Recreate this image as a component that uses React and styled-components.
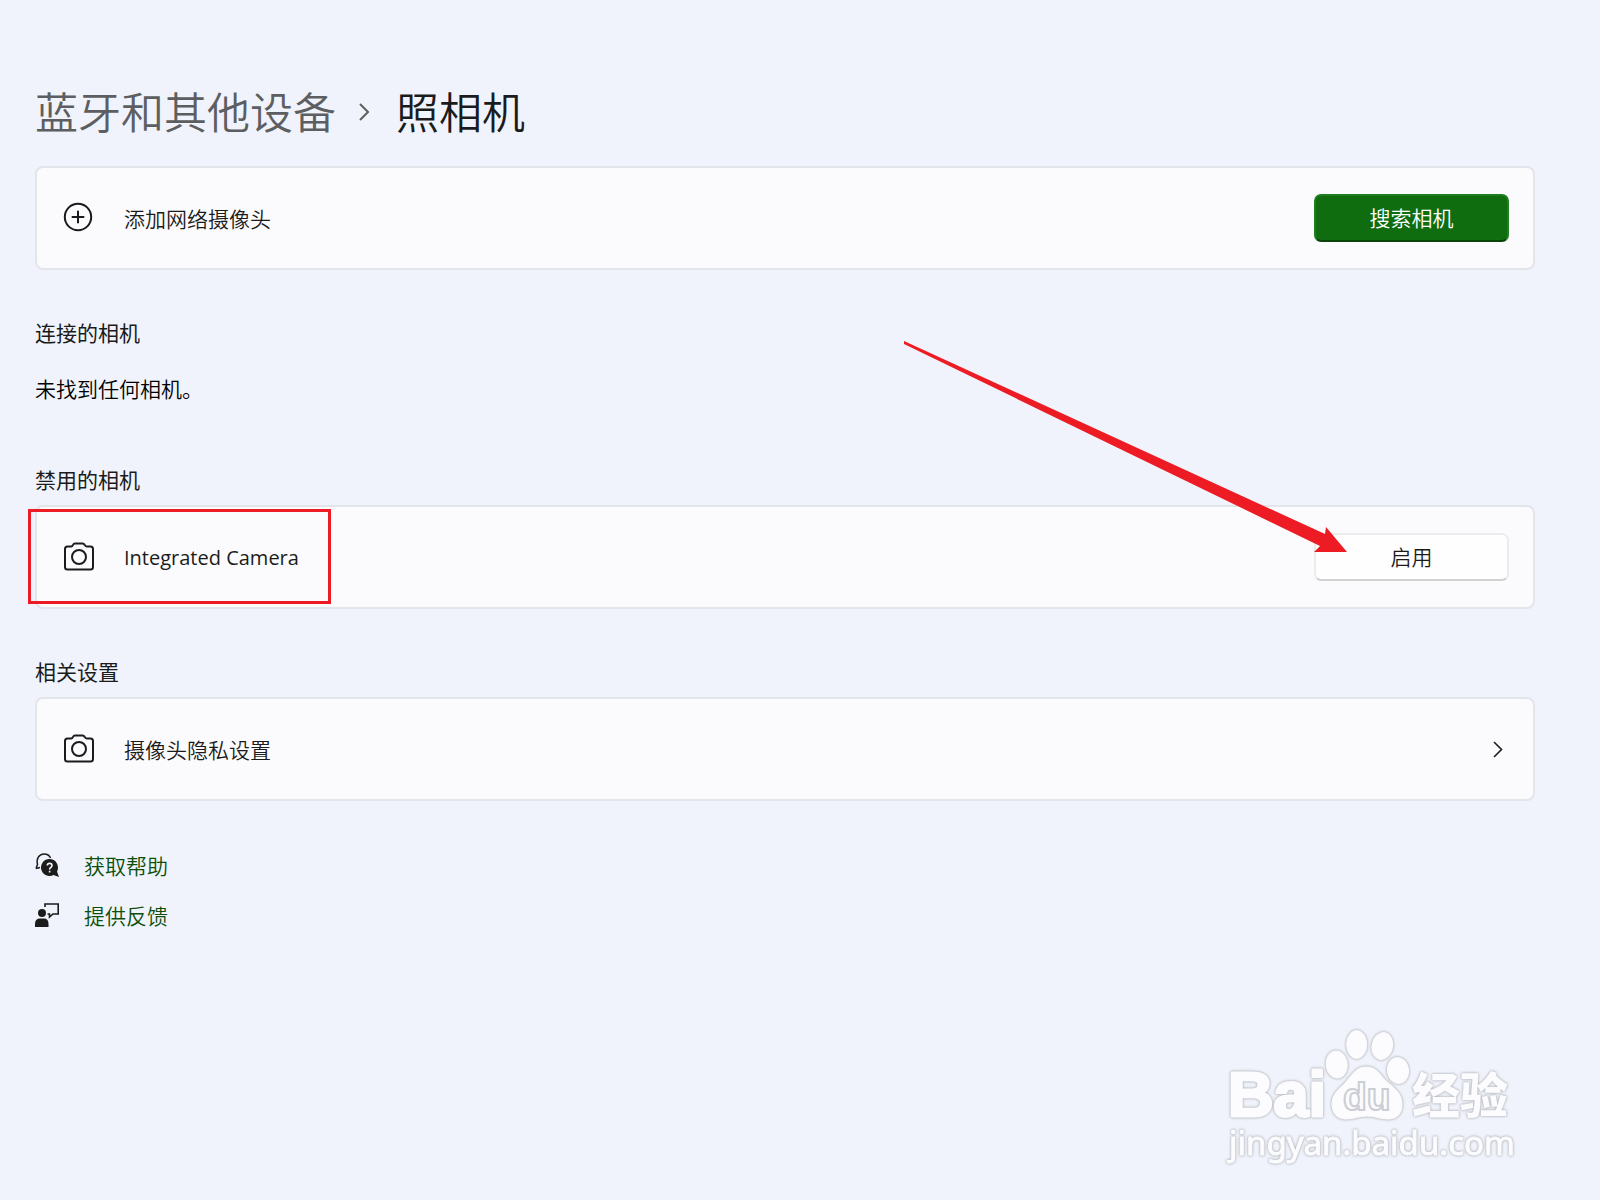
import * as React from 'react'
import styled, { createGlobalStyle } from 'styled-components'

const GlobalStyle = createGlobalStyle`
  *, *::before, *::after {
    box-sizing: border-box;
  }

  body {
    margin: 0;
    background: #f0f3fb;
    color: #1b1b1b;
    font-family: "Noto Sans CJK SC", sans-serif;
    font-size: 21px;
    font-weight: 350;
    line-height: 30px;
  }
`

const Page = styled.main`
  display: flex;
  flex-direction: column;
  min-height: 100vh;
  padding: 80px 65px 20px 35px;
`

const Breadcrumb = styled.nav`
  display: flex;
  align-items: center;
  margin-bottom: 26px;
  font-size: 43px;
  line-height: 60px;
`

const ParentLink = styled.a`
  color: #5d5e61;
  text-decoration: none;
`

const PageTitle = styled.h1`
  margin: 0;
  font-size: inherit;
  font-weight: inherit;
`

const CrumbArrow = styled.svg`
  width: 12px;
  height: 18px;
  margin: 4px 26px 0 22px;
`

const Section = styled.section`
  margin-top: 47px;
`

const SectionTitle = styled.h2`
  margin: 0 0 11px;
  font-size: 21px;
  font-weight: 400;
`

const EmptyNote = styled.p`
  margin: 26px 0 14px;
  color: #000;
`

const Card = styled.div`
  position: relative;
  display: flex;
  align-items: center;
  min-height: 104px;
  padding: 0 24px 0 26px;
  background: #fbfbfd;
  border: 2px solid #e2e5ea;
  border-radius: 8px;
  color: inherit;
  text-decoration: none;
`

const CardIcon = styled.svg`
  flex: none;
  width: 32px;
  height: 32px;
  margin-right: 29px;
`

const CardLabel = styled.span`
  flex: 1;
`

const DeviceName = styled.span`
  font-family: "Open Sans", "Noto Sans", sans-serif;
  font-size: 20px;
  font-weight: 400;
`

const Button = styled.button`
  width: 195px;
  height: 48px;
  padding: 0 0 2px;
  border: 2px solid ${p => (p.$primary ? '#1f7c1f' : '#ececed')};
  border-bottom-color: ${p => (p.$primary ? '#0b430b' : '#d1d1d2')};
  border-radius: 7px;
  background: ${p => (p.$primary ? '#0f6d0f' : '#fefefe')};
  color: ${p => (p.$primary ? '#fff' : '#1b1b1b')};
  font: inherit;
`

const Chevron = styled.svg`
  width: 12px;
  height: 18px;
  margin-right: 5px;
`

const Highlight = styled.div`
  position: absolute;
  top: 2px;
  left: -9px;
  width: 303px;
  height: 95px;
  border: 3px solid #ed1c24;
  pointer-events: none;
`

const Pointer = styled.svg`
  position: absolute;
  right: 186px;
  bottom: 52px;
  width: 444px;
  height: 214px;
  pointer-events: none;
`

const HelpLinks = styled.div`
  display: flex;
  flex-direction: column;
  align-items: flex-start;
  gap: 20px;
  margin-top: 49px;
`

const HelpLink = styled.a`
  display: flex;
  align-items: center;
  gap: 25px;
  color: #0b4f0b;
  text-decoration: none;
`

const HelpIcon = styled.svg`
  width: 24px;
  height: 24px;
  color: #1b1b1b;
`

const Watermark = styled.svg`
  align-self: flex-end;
  width: 320px;
  height: 170px;
  margin: auto 5px 0 0;
`

const Raised = styled.g`
  filter: drop-shadow(0 0 1px #b4b7bd) drop-shadow(0 0 1px #c8cbd1);
`

function CameraIcon () {
  return (
    <CardIcon viewBox='0 0 32 32' fill='none' stroke='currentColor' strokeWidth='2' aria-hidden='true'>
      <path d='M4.500 5.500H8.200C9.300 5.500 9.500 4.900 10 3.900C10.500 2.800 11 2.400 12 2.400H19.600C20.600 2.400 21.100 2.800 21.700 3.900C22.200 4.900 22.500 5.500 23.600 5.500H27.500Q30 5.500 30 8V26Q30 28.500 27.500 28.500H4.500Q2 28.500 2 26V8Q2 5.500 4.500 5.500Z' strokeLinejoin='round' />
      <circle cx='16' cy='16' r='7' />
    </CardIcon>
  )
}

function AddIcon () {
  return (
    <CardIcon viewBox='0 0 32 32' fill='none' stroke='currentColor' strokeWidth='2' aria-hidden='true'>
      <circle cx='15' cy='15' r='13.200' />
      <path d='M15 8.700V21.300M8.700 15H21.300' />
    </CardIcon>
  )
}

function BaiduMark () {
  return (
    <Watermark viewBox='0 0 320 170' role='img' aria-label='Baidu'>
      <Raised fill='#fcfcfe' stroke='#fcfcfe' strokeLinejoin='round'>
        <ellipse cx='126.700' cy='54.500' rx='10.500' ry='13.500' transform='rotate(-6 126.700 54.500)' />
        <ellipse cx='146.700' cy='34.500' rx='10' ry='14' />
        <ellipse cx='172.300' cy='36' rx='10.200' ry='13.500' transform='rotate(12 172.300 36)' />
        <ellipse cx='188' cy='60.500' rx='10.500' ry='13' transform='rotate(-8 188 60.500)' />
        <path d='M156 57C167 57 170 65 176 71C184 78 192 83 192 94C192 104 187 109 178 109C170 109 165 106 157 106C149 106 144 109 136 109C127 109 122 103 122 94C122 83 130 79 136 72C142 65 146 57 156 57Z' />
        <text x='18' y='106' fontFamily='"Liberation Sans", sans-serif' fontWeight='700' fontSize='63' strokeWidth='3'>Bai</text>
        <text x='202' y='103' fontFamily='"Noto Sans CJK SC", sans-serif' fontWeight='900' fontSize='48' strokeWidth='0'>经验</text>
        <text x='19' y='145' fontFamily='"Noto Sans", sans-serif' fontWeight='400' fontSize='33' strokeWidth='1'>jingyan.baidu.com</text>
      </Raised>
      <text x='133' y='100' fill='#fcfcfe' stroke='#cbced4' strokeWidth='2' fontFamily='"Liberation Sans", sans-serif' fontWeight='700' fontSize='39'>du</text>
    </Watermark>
  )
}

export default function App () {
  return (
    <>
      <GlobalStyle />
      <Page>
        <Breadcrumb>
          <ParentLink href='#devices'>蓝牙和其他设备</ParentLink>
          <CrumbArrow viewBox='0 0 12 18' fill='none' stroke='#5d5e61' strokeWidth='2' aria-hidden='true'>
            <path d='M2 1L10 9L2 17' />
          </CrumbArrow>
          <PageTitle>照相机</PageTitle>
        </Breadcrumb>

        <Card>
          <AddIcon />
          <CardLabel>添加网络摄像头</CardLabel>
          <Button $primary type='button'>搜索相机</Button>
        </Card>

        <Section>
          <SectionTitle>连接的相机</SectionTitle>
          <EmptyNote>未找到任何相机。</EmptyNote>
        </Section>

        <Section>
          <SectionTitle>禁用的相机</SectionTitle>
          <Card>
            <CameraIcon />
            <CardLabel>
              <DeviceName>Integrated Camera</DeviceName>
            </CardLabel>
            <Button type='button'>启用</Button>
            <Highlight />
            <Pointer viewBox='0 0 444 214' fill='#ed1c24' aria-hidden='true'>
              <path d='M1 0L422 193L423 186L444 211H411L417 205L1 3Z' />
            </Pointer>
          </Card>
        </Section>

        <Section>
          <SectionTitle>相关设置</SectionTitle>
          <Card as='a' href='#privacy'>
            <CameraIcon />
            <CardLabel>摄像头隐私设置</CardLabel>
            <Chevron viewBox='0 0 12 18' fill='none' stroke='currentColor' strokeWidth='1.600' aria-hidden='true'>
              <path d='M2 2L9.500 9.500L2 17' />
            </Chevron>
          </Card>
        </Section>

        <HelpLinks>
          <HelpLink href='#help'>
            <HelpIcon viewBox='0 0 24 24' aria-hidden='true'>
              <path d='M1 15.500L2.500 11.500C1 6 4 1 9 1C12.500 1 14.500 2.500 15.500 5M1 15.500L5 14.500' fill='none' stroke='currentColor' strokeWidth='1.500' />
              <path d='M14.500 6A8.500 8.500 0 1 0 18.500 22L24 24L22 18.500A8.500 8.500 0 0 0 14.500 6Z' fill='currentColor' />
              <path d='M12.300 12.500C12.300 9.700 17 9.700 17 12.500C17 14.300 14.600 14.300 14.600 16.500M14.600 17.800V19.400' fill='none' stroke='#f0f3fb' strokeWidth='1.600' />
            </HelpIcon>
            获取帮助
          </HelpLink>
          <HelpLink href='#feedback'>
            <HelpIcon viewBox='0 0 24 24' aria-hidden='true'>
              <path d='M10 4V1H23.200V11H18L14.500 14V11H12.500' fill='none' stroke='currentColor' strokeWidth='1.600' />
              <circle cx='7' cy='10' r='4' fill='currentColor' />
              <path d='M0 24V21Q0 15.500 5 15.500H9Q13.500 15.500 13.500 21V24Z' fill='currentColor' />
            </HelpIcon>
            提供反馈
          </HelpLink>
        </HelpLinks>

        <BaiduMark />
      </Page>
    </>
  )
}
